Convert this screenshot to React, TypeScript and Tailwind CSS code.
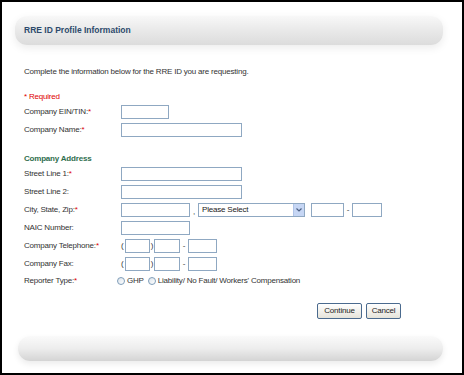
import React from 'react';

const Req = () => <span className="text-[#e00000]">*</span>;

const Box = ({ w }: { w: string }) => (
  <div className={`${w} h-[14px] border border-[#8fa8c2] bg-white`} />
);

const Row = ({ label, req, children }: { label: string; req?: boolean; children?: React.ReactNode }) => (
  <div className="flex items-center h-[18px]">
    <div className="w-[97px] shrink-0 text-[#333]">
      {label}
      {req && <Req />}
    </div>
    <div className="flex items-center">{children}</div>
  </div>
);

const Radio = ({ label }: { label: string }) => (
  <span className="flex items-center mr-[4px]">
    <span className="w-[8px] h-[8px] rounded-full border border-[#7f9db9] bg-gradient-to-br from-[#dce4ec] to-white mr-[2px]" />
    <span>{label}</span>
  </span>
);

const PhoneBoxes = () => (
  <div className="flex items-center">
    <span className="w-[4px]">(</span>
    <Box w="w-[25px]" />
    <span className="w-[4px] text-center">)</span>
    <Box w="w-[26px]" />
    <span className="w-[8px] text-center">-</span>
    <Box w="w-[29px]" />
  </div>
);

const XpButton = ({ children, w }: { children: React.ReactNode; w: string }) => (
  <button className={`${w} h-[16px] rounded-[2px] border border-[#4a6a8e] bg-gradient-to-b from-white to-[#e6e4da] text-[#222] text-[8px] leading-none`}>
    {children}
  </button>
);

export default function App() {
  return (
    <div
      className="w-[464px] h-[375px] border-2 border-black bg-white flex flex-col text-[8px] tracking-[-0.2px] text-[#333]"
      style={{ fontFamily: '"Liberation Sans", Arial, sans-serif' }}
    >
      {/* header bar */}
      <div className="mt-[14px] ml-[13px] mr-[19px] h-[29px] rounded-[12px] bg-gradient-to-b from-[#f8f8f8] via-[#e9e9e9] to-[#dcdcdc] shadow-[0_3px_8px_rgba(0,0,0,0.08)] flex items-center pl-[9px]">
        <span className="text-[8.5px] font-bold tracking-normal text-[#2d4a6c]">RRE ID Profile Information</span>
      </div>

      <div className="pl-[22px] flex flex-col">
        <div className="mt-[18px] h-[18px] flex items-center">
          Complete the information below for the RRE ID you are requesting.
        </div>

        <div className="mt-[10px] h-[12px] flex items-center text-[#e00000]">* Required</div>

        <Row label="Company EIN/TIN:" req>
          <Box w="w-[48px]" />
        </Row>
        <Row label="Company Name:" req>
          <Box w="w-[121px]" />
        </Row>

        <div className="mt-[14px] h-[12px] flex items-center font-bold text-[#2f6e4e]">Company Address</div>

        <Row label="Street Line 1:" req>
          <Box w="w-[121px]" />
        </Row>
        <Row label="Street Line 2:">
          <Box w="w-[121px]" />
        </Row>
        <Row label="City, State, Zip:" req>
          <Box w="w-[69px]" />
          <span className="w-[8px] text-center mt-[3px]">,</span>
          <div className="w-[107px] h-[14px] border border-[#8fa8c2] bg-white flex items-center justify-between pl-[3px]">
            <span className="text-[#222]">Please Select</span>
            <span className="w-[11px] h-[12px] bg-[#c6d6f4] border-l border-[#b0c4e8] flex items-center justify-center">
              <svg width="6" height="4" viewBox="0 0 6 4">
                <path d="M0.5 0.5 L3 3 L5.5 0.5" fill="none" stroke="#4d6185" strokeWidth="1.2" />
              </svg>
            </span>
          </div>
          <span className="w-[6px]" />
          <Box w="w-[33px]" />
          <span className="w-[8px] text-center">-</span>
          <Box w="w-[30px]" />
        </Row>
        <Row label="NAIC Number:">
          <Box w="w-[69px]" />
        </Row>
        <Row label="Company Telephone:" req>
          <PhoneBoxes />
        </Row>
        <Row label="Company Fax:">
          <PhoneBoxes />
        </Row>
        <div className="flex items-center h-[16px]">
          <div className="w-[93px] shrink-0">
            Reporter Type:<Req />
          </div>
          <Radio label="GHP" />
          <Radio label="Liability/ No Fault/ Workers' Compensation" />
        </div>
      </div>

      <div className="mt-[14px] flex justify-end gap-[4px] mr-[61px]">
        <XpButton w="w-[45px]">Continue</XpButton>
        <XpButton w="w-[35px]">Cancel</XpButton>
      </div>

      {/* footer bar */}
      <div className="mt-[17px] ml-[16px] mr-[19px] h-[25px] rounded-[12px] bg-gradient-to-b from-[#fafafa] via-[#ededed] to-[#d4d4d4] shadow-[0_3px_6px_rgba(0,0,0,0.08)]" />
    </div>
  );
}
